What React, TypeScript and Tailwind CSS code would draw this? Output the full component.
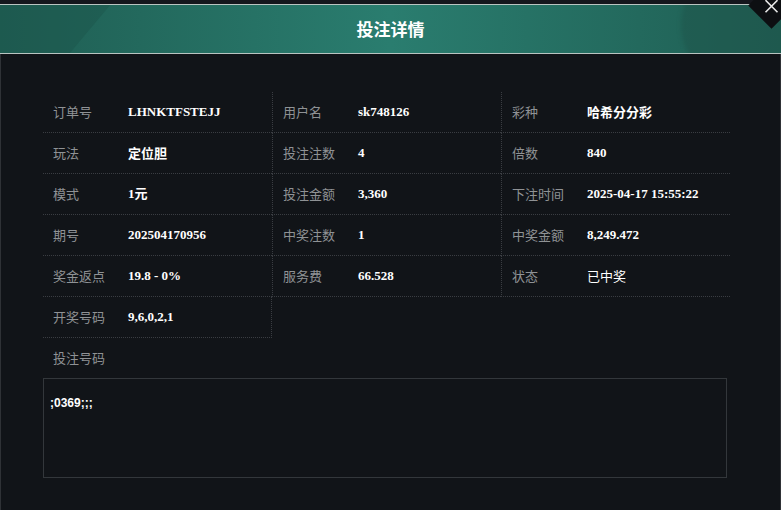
import React from "react"

type Cell = { label: string; value: string; cjk?: boolean; light?: boolean }

const rows: Cell[][] = [
  [
    { label: "订单号", value: "LHNKTFSTEJJ" },
    { label: "用户名", value: "sk748126" },
    { label: "彩种", value: "哈希分分彩", cjk: true },
  ],
  [
    { label: "玩法", value: "定位胆", cjk: true },
    { label: "投注注数", value: "4" },
    { label: "倍数", value: "840" },
  ],
  [
    { label: "模式", value: "1元" },
    { label: "投注金额", value: "3,360" },
    { label: "下注时间", value: "2025-04-17 15:55:22" },
  ],
  [
    { label: "期号", value: "202504170956" },
    { label: "中奖注数", value: "1" },
    { label: "中奖金额", value: "8,249.472" },
  ],
  [
    { label: "奖金返点", value: "19.8 - 0%" },
    { label: "服务费", value: "66.528" },
    { label: "状态", value: "已中奖", cjk: true, light: true },
  ],
]

const cjk = "font-['Noto_Sans_CJK_SC',sans-serif]"
const serif = "font-['Liberation_Serif','Noto_Sans_CJK_SC',serif]"

function InfoCell({ cell, first }: { cell: Cell; first: boolean }) {
  return (
    <div
      className={`flex h-[41px] items-center border-b border-dotted border-[#3a3d42] ${
        first ? "" : "border-l"
      }`}
    >
      <span className={`w-[85px] shrink-0 pl-[10px] text-[13px] text-[#8f9295] ${cjk}`}>
        {cell.label}
      </span>
      <span
        className={`text-[13px] text-white ${
          cell.light ? `${cjk} font-normal` : `${cell.cjk ? cjk : serif} font-bold`
        }`}
      >
        {cell.value}
      </span>
    </div>
  )
}

export default function App() {
  return (
    <div className="h-[510px] w-[781px] overflow-hidden bg-[#15171d]">
      {/* 标题栏 */}
      <div className="relative mt-[4px] h-[50px] overflow-hidden border-y border-[#b9c4c1] bg-gradient-to-r from-[#1f5e53] via-[#2a7d6f] to-[#1f5e53]">
        <div className="pointer-events-none absolute -left-[50px] top-0 h-full w-[140px] -skew-x-[40deg] bg-[#1c554b]/50" />
        <div className="pointer-events-none absolute -right-[20px] -top-[40px] h-[120px] w-[120px] rounded-full bg-[#1d5349]/50 blur-[2px]" />
        <div className="flex h-full items-center justify-center">
          <span className={`text-[17px] font-bold text-white ${cjk}`}>投注详情</span>
        </div>
      </div>

      {/* 关闭按钮 */}
      <div className="absolute left-[755px] top-[-11px] flex h-[33px] w-[33px] rotate-45 items-center justify-center bg-[#0d0f12]">
        <svg width="18" height="18" viewBox="0 0 18 18" className="-rotate-45" fill="none" stroke="#e6e6e6" strokeWidth="1.6">
          <path d="M3 3 L15 15 M15 3 L3 15" />
        </svg>
      </div>

      {/* 内容 */}
      <div className="h-[456px] border-x border-[#2f3236] bg-[#111418] px-[42px] pt-[38px]">
        <div className="grid w-[687px] grid-cols-3">
          {rows.map((row, i) =>
            row.map((cell, j) => <InfoCell key={`${i}-${j}`} cell={cell} first={j === 0} />)
          )}
          <div className="flex h-[41px] items-center border-b border-r border-dotted border-[#3a3d42]">
            <span className={`w-[85px] shrink-0 pl-[10px] text-[13px] text-[#8f9295] ${cjk}`}>开奖号码</span>
            <span className={`text-[13px] font-bold text-white ${serif}`}>9,6,0,2,1</span>
          </div>
        </div>

        <div className={`flex h-[40px] items-center pl-[10px] text-[13px] text-[#8f9295] ${cjk}`}>投注号码</div>

        <div className="h-[100px] w-[684px] border border-[#33373b] bg-[#111418] px-[6px] pt-[10px]">
          <span className="font-['Liberation_Sans',sans-serif] text-[12px] font-bold text-white">;0369;;;</span>
        </div>
      </div>
    </div>
  )
}
